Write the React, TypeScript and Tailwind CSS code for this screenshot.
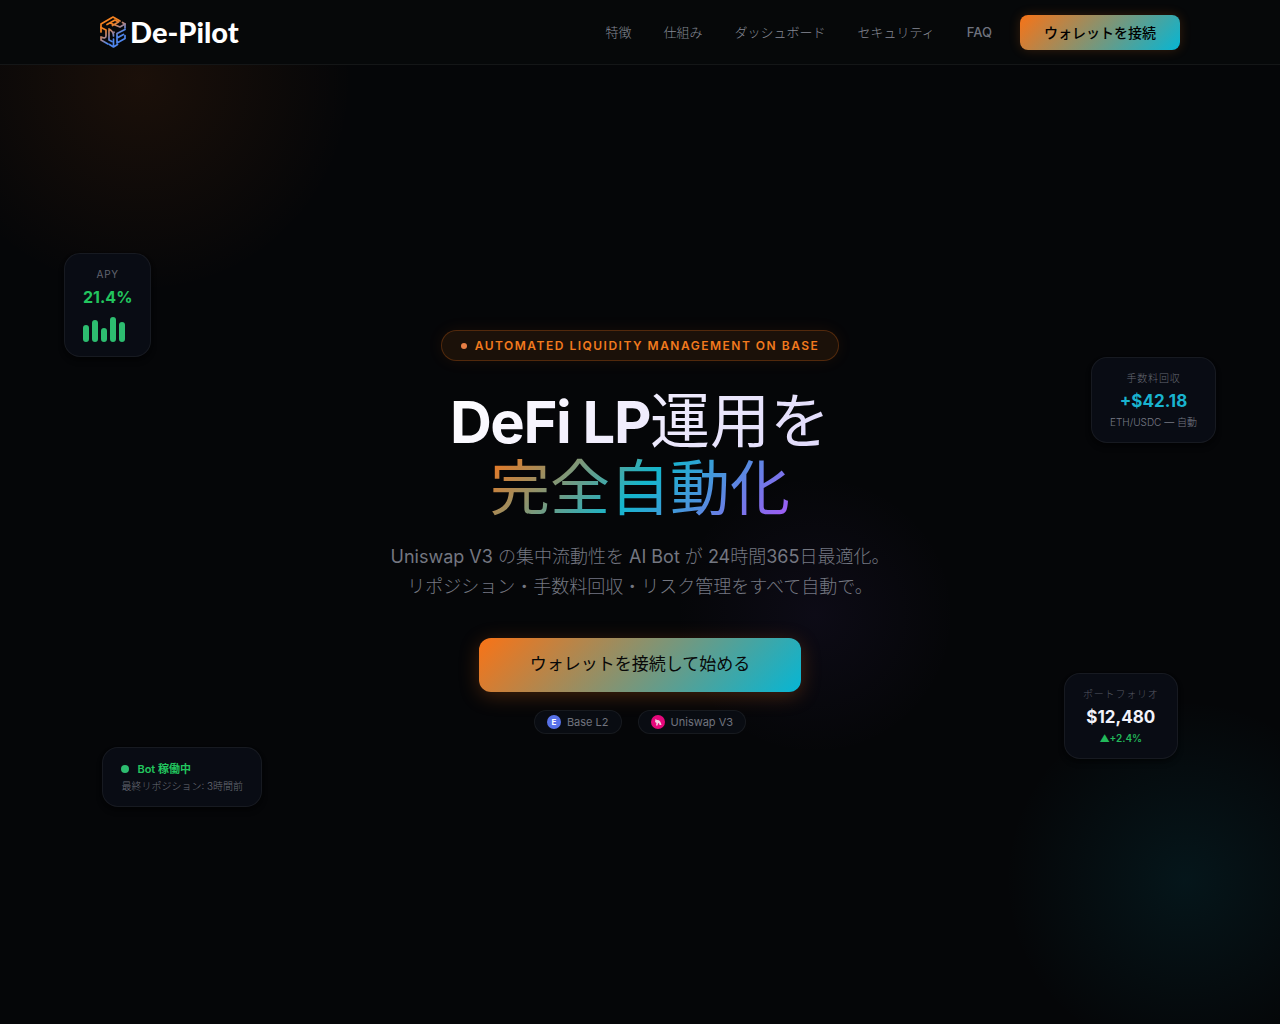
import type { ReactNode } from 'react';

const NAV_ITEMS = [
  { label: '特徴', href: '#features' },
  { label: '仕組み', href: '#how' },
  { label: 'ダッシュボード', href: '#dashboard' },
  { label: 'セキュリティ', href: '#security' },
  { label: 'FAQ', href: '#faq' },
];

const BARS = ['h-[17px]', 'h-[22px]', 'h-[14px]', 'h-[25px]', 'h-5'];

function Logo() {
  return (
    <a href="#" className="flex items-center gap-1">
      <svg className="h-8 w-[26px]" viewBox="0 0 26 32" fill="none" strokeWidth="1.7" strokeLinejoin="round" strokeLinecap="round" aria-hidden="true">
        <defs>
          <linearGradient id="cube" x1="5" y1="5" x2="21" y2="27" gradientUnits="userSpaceOnUse">
            <stop offset="0.25" stopColor="#f58220" />
            <stop offset="0.5" stopColor="#a48490" />
            <stop offset="0.7" stopColor="#4f86ec" />
          </linearGradient>
        </defs>
        <g stroke="url(#cube)">
          {/* top face */}
          <path d="M1 16V8l12-7 7 4M22.500 6.500L25 8v4" />
          <path d="M7 8.500l8-4.500 3.500 2-6 3.500M10 7l10 4 5-3" />
          {/* left face */}
          <path d="M1 11.500l5 2.500v6c0 2-2 2.500-5 1v3l7 4" />
          <path d="M9 13v11l3 1.500M9 13c3 1.500 4.500 4 4.500 7" />
          {/* right face and bottom edge */}
          <path d="M13.500 23v8M9.500 28.500l4 2.500 4-2.500M14 16v.5" />
          <path d="M25 13.500l-8 4V27l8-4.500v-3M17 22l6.500-3.500" />
        </g>
      </svg>
      <span className="font-['Lato',sans-serif] text-[29px] font-black leading-8 text-white">De-Pilot</span>
    </a>
  );
}

function FloatCard({ className, children }: { className: string; children: ReactNode }) {
  return (
    <div className={`absolute rounded-2xl border border-white/6 bg-[#090c14] px-[18px] shadow-md shadow-black/40 ${className}`}>
      {children}
    </div>
  );
}

function Header() {
  return (
    <header className="absolute inset-x-0 top-0 z-10 border-b border-white/6 bg-[#060809]">
      <div className="mx-auto flex h-16 max-w-[1080px] items-center justify-between">
        <Logo />
        <div className="flex items-center gap-7">
          <nav className="flex items-center gap-8 pt-px text-[13px] font-light text-[#858994]">
            {NAV_ITEMS.map((item) => (
              <a key={item.label} href={item.href} className={item.label === 'FAQ' ? 'font-medium text-[#6f737e]' : ''}>
                {item.label}
              </a>
            ))}
          </nav>
          <button className="h-[35px] rounded-lg bg-linear-135/srgb from-[#f97316] to-[#06b6d4] px-6 text-[14px] font-medium text-black shadow-[0_0_12px_rgba(249,115,22,0.2)]">
            ウォレットを接続
          </button>
        </div>
      </div>
    </header>
  );
}

export default function App() {
  return (
    <div className="relative min-h-screen overflow-hidden bg-[#050608] font-['Inter','Noto_Sans_CJK_JP',sans-serif]">
      {/* Ambient glows */}
      <div className="absolute -left-[110px] -top-[170px] size-[500px] bg-[radial-gradient(closest-side,rgba(249,115,22,0.09),transparent_85%)]" />
      <div className="absolute -right-[105px] top-[680px] size-[400px] bg-[radial-gradient(closest-side,rgba(6,182,212,0.09),transparent_90%)]" />
      <div className="absolute left-[640px] top-[440px] size-[350px] bg-[radial-gradient(closest-side,rgba(139,92,246,0.06),transparent_80%)]" />

      <Header />

      <main className="relative flex min-h-screen flex-col items-center px-6 pt-[330px] text-center">
        <div className="flex h-[31px] items-center gap-2 rounded-full border border-[#f97316]/25 bg-[#1b1109] px-[19px] text-[12px] font-semibold tracking-[1.5px] text-[#f27a1e] shadow-[0_0_16px_rgba(249,115,22,0.08)]">
          <span className="size-1.5 rounded-full bg-[#e87f45]" />
          AUTOMATED LIQUIDITY MANAGEMENT ON BASE
        </div>

        <h1 className="mt-[27px] text-[60px] font-normal leading-[66px]">
          <span className="bg-linear-135/srgb from-white to-[#e0d9fb] bg-clip-text text-transparent">
            <span className="text-[58px] font-bold tracking-tight">DeFi LP</span>運用を
          </span>
          <br />
          <span className="bg-linear-135/srgb from-[#f97316] via-[#14b6cd] to-[#a855f7] bg-clip-text text-transparent">完全自動化</span>
        </h1>

        <p className="mt-[21px] text-[18px] font-light leading-[30px] text-[#747781]">
          <span className="font-normal">Uniswap V3</span> の集中流動性を <span className="font-normal">AI Bot</span> が{' '}
          <span className="font-normal">24</span>時間<span className="font-normal">365</span>日最適化。
          <br />
          リポジション・手数料回収・リスク管理をすべて自動で。
        </p>

        <button className="mt-9 h-[54px] rounded-xl bg-linear-135/srgb from-[#f97316] to-[#06b6d4] px-[51px] text-[17px] font-normal text-[#080808] shadow-[0_4px_20px_rgba(249,115,22,0.25)]">
          ウォレットを接続して始める
        </button>

        <div className="mt-[18px] flex gap-4 text-[11px] text-[#71747f]">
          <span className="flex h-6 items-center gap-1.5 rounded-full border border-white/6 bg-[#090c12] px-3">
            <span className="flex size-3.5 items-center justify-center rounded-full bg-[#5872e8] text-[8px] font-bold text-white">E</span>
            Base L2
          </span>
          <span className="flex h-6 items-center gap-1.5 rounded-full border border-white/6 bg-[#090c12] px-3">
            <svg className="size-3.5" viewBox="0 0 14 14" aria-hidden="true">
              <circle cx="7" cy="7" r="7" fill="#e5087b" />
              <path d="M4.500 4l1.500 1c2-.5 4 1.500 4.500 5H8.500l-.5-2-1 .5-.5 2H5l.5-2.500-1.500-1z" fill="#f3cfe2" />
            </svg>
            Uniswap V3
          </span>
        </div>
      </main>

      <FloatCard className="left-[5%] top-[253px] h-[104px] pt-3 text-center">
        <div className="text-[10px] leading-4 tracking-[0.8px] text-[#626570]">APY</div>
        <div className="mt-[3px] text-[16px] font-bold leading-6 text-[#22c55e]">21.4%</div>
        <div className="mt-2 flex h-[25px] items-end gap-[3px]">
          {BARS.map((height, i) => (
            <span key={i} className={`w-1.5 rounded-[3px] bg-[#2dbd70] ${height}`} />
          ))}
        </div>
      </FloatCard>

      <FloatCard className="right-[5%] top-[357px] h-[86px] pt-3 text-center">
        <div className="text-[10px] font-light leading-4 tracking-[0.8px] text-[#656873]">手数料回収</div>
        <div className="mt-[3px] text-[17px] font-bold leading-6 text-[#19b3cf]">+$42.18</div>
        <div className="mt-px text-[10px] font-light leading-4 text-[#777a85]">ETH/USDC — 自動</div>
      </FloatCard>

      <FloatCard className="right-[8%] top-[673px] h-[86px] pt-3 text-center">
        <div className="text-[10px] font-light leading-4 tracking-[0.8px] text-[#555863]">ポートフォリオ</div>
        <div className="mt-[3px] text-[17px] font-bold leading-6 text-[#f1f2fa]">$12,480</div>
        <div className="mt-px text-[10px] font-semibold leading-4 text-[#22b95a]">▲+2.4%</div>
      </FloatCard>

      <FloatCard className="left-[8%] top-[747px] h-[60px] pt-[13px]">
        <div className="flex items-center gap-2 text-[11px] font-semibold leading-4 text-[#22c55e]">
          <span className="size-2 rounded-full bg-[#2dbd70]" />
          Bot 稼働中
        </div>
        <div className="text-[10px] font-light leading-[18px] text-[#696c77]">最終リポジション: 3時間前</div>
      </FloatCard>
    </div>
  );
}
